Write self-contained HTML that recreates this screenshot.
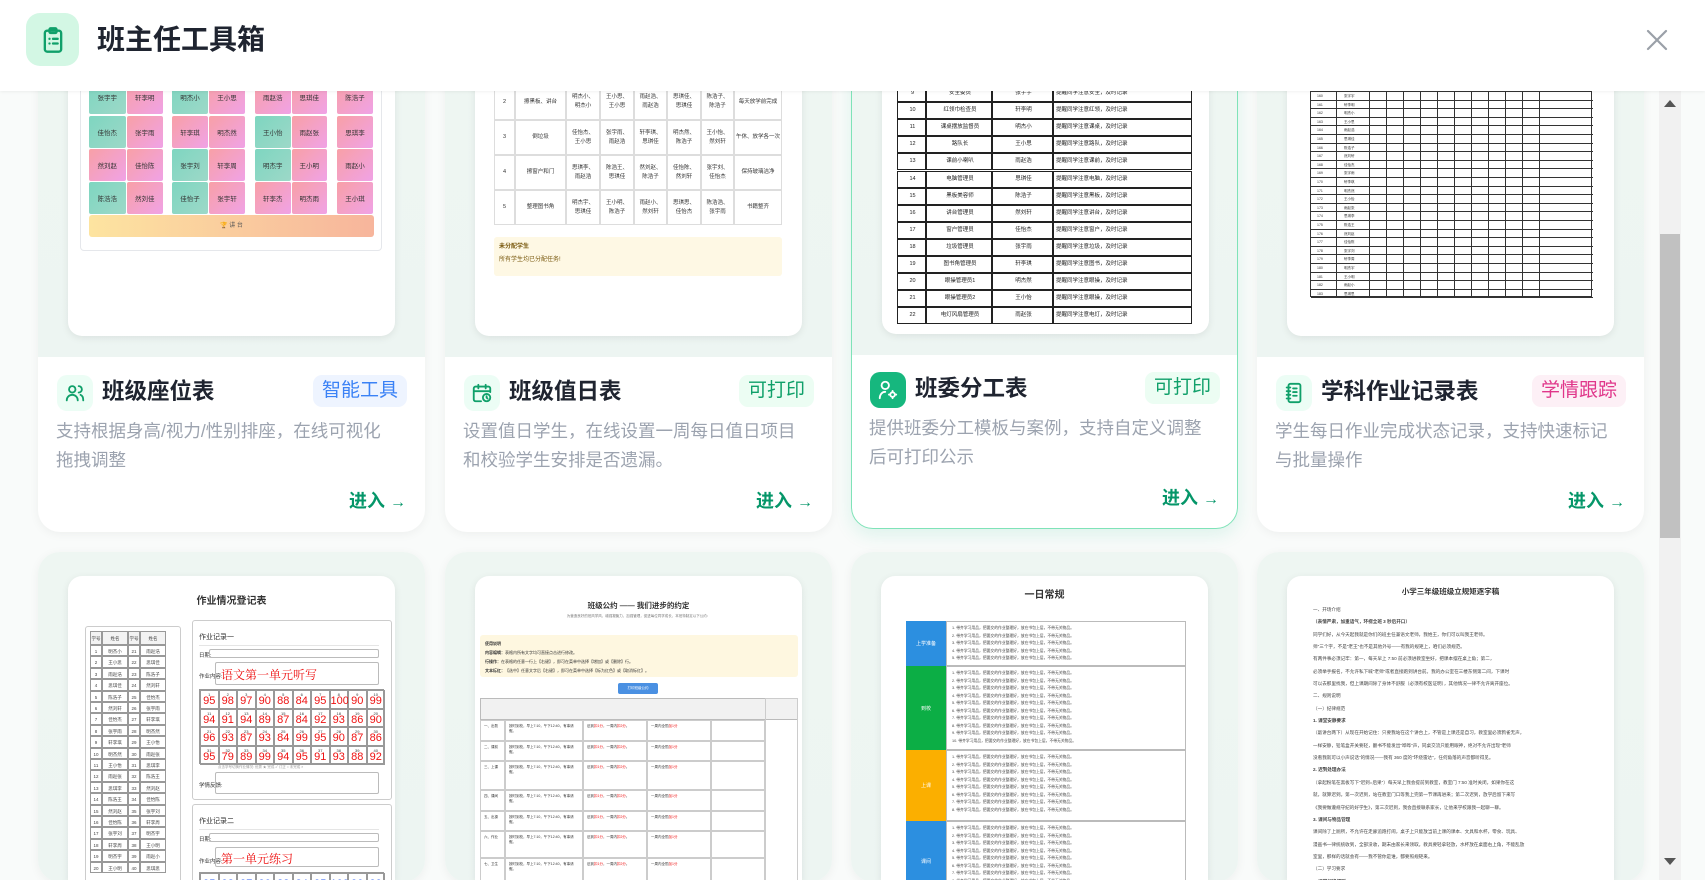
<!DOCTYPE html>
<html><head><meta charset="utf-8">
<style>
*{margin:0;padding:0;box-sizing:border-box}
html{overflow:hidden;width:1705px;height:893px}
body{width:1705px;height:893px;overflow:hidden;background:#fff;font-family:"Liberation Sans","Noto Sans CJK SC",sans-serif;position:relative}
.abs{position:absolute}
#hdr{position:absolute;left:0;top:0;width:1705px;height:91px;background:#fff;box-shadow:0 1px 3px rgba(0,0,0,.06);z-index:5}
#main{position:absolute;left:0;top:91px;width:1705px;height:789px;overflow:hidden;background:#f9fbfa}
.card{position:absolute;width:387px;border-radius:22px;background:#fff;box-shadow:0 2px 10px rgba(0,0,0,.05);overflow:hidden}
.prev{position:absolute;left:0;top:0;width:387px;background:linear-gradient(180deg,#eef6f2,#edf5f2)}
.paper{position:absolute;background:#fff;box-shadow:0 2px 8px rgba(0,0,0,.08);overflow:hidden}
.ic{position:absolute;width:36px;height:36px;border-radius:10px;background:#ecfdf5;display:flex;align-items:center;justify-content:center}
.tt{position:absolute;font-size:22.5px;font-weight:bold;color:#1f2430;line-height:36px;white-space:nowrap}
.bd{position:absolute;height:32px;line-height:32px;font-size:19px;padding:0 9px;border-radius:9px;white-space:nowrap}
.ds{position:absolute;font-size:17.5px;line-height:29px;color:#9ca3af;width:339px}
.en{position:absolute;font-size:18px;font-weight:bold;color:#059669;white-space:nowrap}
</style></head><body>
<div id="hdr">
 <div class="abs" style="left:26px;top:13px;width:53px;height:53px;border-radius:14px;background:#d3f7e4;display:flex;align-items:center;justify-content:center">
  <svg width="28" height="28" viewBox="0 0 24 24" fill="none" stroke="#10a06a" stroke-width="2" stroke-linecap="round" stroke-linejoin="round"><rect x="5" y="4" width="14" height="18" rx="2"/><rect x="9" y="2" width="6" height="4" rx="1"/><path d="M9 11h.01M12 11h4M9 15h.01M12 15h4"/></svg>
 </div>
 <div class="abs" style="left:97px;top:20px;font-size:28px;font-weight:bold;color:#1f2430;line-height:40px">班主任工具箱</div>
 <svg class="abs" style="left:1645px;top:28px" width="24" height="24" viewBox="0 0 24 24" stroke="#9aa0a8" stroke-width="2.2" stroke-linecap="round"><path d="M3 3L21 21M21 3L3 21"/></svg>
</div>
<div id="main"></div>
<div class="abs" style="left:1659px;top:91px;width:22px;height:789px;background:#f1f1f1"></div>
<div class="abs" style="left:1660px;top:234px;width:20px;height:304px;background:#c1c1c1"></div>
<div class="abs" style="left:1664px;top:100px;width:0;height:0;border-left:6px solid transparent;border-right:6px solid transparent;border-bottom:7px solid #555"></div>
<div class="abs" style="left:1664px;top:858px;width:0;height:0;border-left:6px solid transparent;border-right:6px solid transparent;border-top:7px solid #555"></div>
<script>
const M=document.getElementById('main');const O=91;
function el(p,css,html){const d=document.createElement('div');d.style.cssText='position:absolute;'+css;if(html)d.innerHTML=html;p.appendChild(d);return d}
const Ls=[38,445,851,1257];
const icons=[
'<svg width="22" height="22" viewBox="0 0 24 24" fill="none" stroke="#10a06a" stroke-width="2" stroke-linecap="round"><circle cx="9" cy="8" r="3.5"/><path d="M3 20c0-3.5 2.7-6 6-6s6 2.5 6 6M16 4.5a3.5 3.5 0 0 1 0 7M18 14c2 .8 3 3 3 6"/></svg>',
'<svg width="22" height="22" viewBox="0 0 24 24" fill="none" stroke="#10a06a" stroke-width="2" stroke-linecap="round"><path d="M11 21H5a2 2 0 0 1-2-2V7a2 2 0 0 1 2-2h14a2 2 0 0 1 2 2v4M16 3v4M8 3v4M3 10h18"/><circle cx="17" cy="17" r="4"/><path d="M17 15.5V17l1 1"/></svg>',
'<svg width="22" height="22" viewBox="0 0 24 24" fill="none" stroke="#fff" stroke-width="2" stroke-linecap="round"><circle cx="9" cy="7" r="4"/><path d="M3 21c0-4 2.5-7 6-7"/><circle cx="17" cy="17" r="2.5"/><path d="M17 13v1M17 20v1M13 17h1M20 17h1"/></svg>',
'<svg width="22" height="22" viewBox="0 0 24 24" fill="none" stroke="#10a06a" stroke-width="2" stroke-linecap="round"><rect x="6" y="2" width="13" height="20" rx="2"/><path d="M4 6h4M4 10h4M4 14h4M4 18h4M11 7h4M11 11h4M11 15h4"/></svg>'];
const data=[
['班级座位表','智能工具','#3b82f6','#eef4ff','支持根据身高/视力/性别排座，在线可视化拖拽调整'],
['班级值日表','可打印','#10a06a','#ecfdf3','设置值日学生，在线设置一周每日值日项目和校验学生安排是否遗漏。'],
['班委分工表','可打印','#10a06a','#ecfdf3','提供班委分工模板与案例，支持自定义调整后可打印公示'],
['学科作业记录表','学情跟踪','#e0368a','#fdf0f6','学生每日作业完成状态记录，支持快速标记与批量操作']];
const names='张宇轩李明杰王小雨赵思琪陈浩然刘佳怡周子墨吴欣妍郑一鸣孙若曦';
function nm(i){return names.substr((i*2)%18,2)+names.charAt((i*3+1)%20)}
Ls.forEach((L,i)=>{
 const dy=i==2?-3:0;
 const c=el(M,`left:${L}px;top:${-70+dy}px;height:${532+70-O}px;`+(i==2?'border:1.5px solid #7fe3b8;box-shadow:0 6px 18px rgba(16,185,129,.12);':''));c.className='card';
 const p=el(c,`height:${357+70-O}px`);p.className='prev';
 const pa=el(c,`left:30px;top:0;width:327px;height:${336+70-O}px;border-radius:0 0 14px 14px`);pa.className='paper';
 const y0=70-O;
 if(i==0){
  el(pa,`left:12px;top:${y0+70}px;width:302px;height:${251-70}px;border:1px solid #e5e7eb;border-radius:4px`);
  const cols=[[89,164],[172,246],[255,328],[337,374]],rows=[[80,114],[116,148],[149,181],[182,214]];
  rows.forEach((r,ri)=>cols.forEach((cc,ci)=>{const w=cc[1]-cc[0];const n=w>40?2:1;for(let k=0;k<n;k++){const x=cc[0]+k*w/n;const teal=(k==0&&(ci+ri)%3!=2&&ci<3);
   el(pa,`left:${x-68}px;top:${y0+r[0]}px;width:${w/n-1}px;height:${r[1]-r[0]}px;background:${teal?'linear-gradient(135deg,#7ed6c0,#9dd8c8)':'linear-gradient(135deg,#f8a0a6,#f0a2e6)'};font-size:6.5px;color:#333;display:flex;align-items:center;justify-content:center;border-radius:2px`,nm(ri*8+ci*2+k))}}));
  el(pa,`left:21px;top:${y0+215}px;width:285px;height:22px;background:linear-gradient(90deg,#fde4a0,#f7b59c);border-radius:3px;font-size:6px;color:#555;text-align:center;line-height:22px`,'🏆 讲 台');
 }
 if(i==1){
  const xs=[494,515,566,600,634,667,701,734,782];const ys=[84,120,155,190,225];
  for(let r=0;r<4;r++)xs.slice(0,-1).forEach((x,k)=>{el(pa,`left:${x-475}px;top:${y0+ys[r]}px;width:${xs[k+1]-x}px;height:${ys[r+1]-ys[r]}px;border:0.5px solid #ddd;font-size:5.5px;color:#333;display:flex;align-items:center;justify-content:center;text-align:center;line-height:9px;padding:1px`,k==0?(r+2):k==1?['擦黑板、讲台','倒垃圾','擦窗户和门','整理图书角'][r]:k==7?['每天放学前完成','午休、放学各一次','保持玻璃洁净','书籍整齐'][r]:nm(r*6+k)+'、<br>'+nm(r+k))});
  el(pa,`left:19px;top:${y0+237}px;width:288px;height:39px;background:#fef8e4;border-radius:3px;font-size:6px;color:#7a5a10;padding:4px 5px;line-height:13px`,'<b>未分配学生</b><br>所有学生均已分配任务!');
 }
 if(i==2){
  const t=['安全委员','红领巾检查员','课桌摆放监督员','路队长','课前小喇叭','电脑管理员','黑板美容师','讲台管理员','窗户管理员','垃圾管理员','图书角管理员','眼操管理员1','眼操管理员2','电灯风扇管理员'];
  for(let r=0;r<14;r++){const y=87+r*17.1;[[896,925,r+9],[925,991,t[r]],[991,1052,nm(r)],[1052,1191,'提醒同学注意'+t[r].substr(0,2)+'，及时记录']].forEach(q=>el(pa,`left:${q[0]-881}px;top:${y0+y}px;width:${q[1]-q[0]}px;height:17.1px;border:0.8px solid #222;font-size:5.5px;color:#222;line-height:15px;text-align:${q[0]==1052?'left':'center'};padding-left:2px;white-space:nowrap;overflow:hidden`,q[2]))}
 }
 if(i==3){
  let h='';for(let r=0;r<24;r++){h+=`<div style="position:absolute;left:0;top:${r*8.6}px;width:282px;height:8.6px;border-bottom:0.8px solid #333;font-size:3.5px;line-height:8px;color:#333"><span style="position:absolute;left:6px">${160+r}</span><span style="position:absolute;left:33px">${nm(r)}</span></div>`}
  [25,58,75,92,109,126,143,160,177,194,211,228].forEach(x=>h+=`<div style="position:absolute;left:${x}px;top:0;width:0.8px;height:206px;background:#333"></div>`);
  el(pa,`left:${1310-1287}px;top:${y0+91}px;width:282px;height:206px;border:1px solid #333`,h);
 }
 const d=data[i];
 const ic=el(M,`left:${L+19}px;top:${375+dy-O}px;`+(i==2?'background:#16b77e;':''),icons[i]);ic.className='ic';
 el(M,`left:${L+64}px;top:${374+dy-O}px`,d[0]).className='tt';
 el(M,`right:${1705-(L+369)}px;top:${375+dy-O}px;color:${d[2]};background:${d[3]}`,d[1]).className='bd';
 el(M,`left:${L+18}px;top:${417+dy-O}px`,d[4]).className='ds';
 el(M,`right:${1705-(L+368)}px;top:${487+dy-O}px`,'进入 <span style="font-size:16px">→</span>').className='en';
 const c2=el(M,`left:${L}px;top:${552-O}px;height:330px`);c2.className='card';
 el(c2,'height:330px').className='prev';
 const p2=el(c2,`left:30px;top:24px;width:327px;height:306px;border-radius:14px 14px 0 0`);p2.className='paper';
});
const papers=[...M.querySelectorAll('.card')].filter((c,k)=>k%2==1).map(c=>c.querySelector('.paper'));
function txt(p,x,y,s,css){return el(p,`left:${x}px;top:${y}px;`+(css||''),s)}
(function(p){
 txt(p,0,16,'作业情况登记表','width:327px;text-align:center;font-size:10px;font-weight:bold;color:#333');
 el(p,'left:17px;top:50px;width:96px;height:340px;border:1px solid #ccc;border-radius:3px');
 let h='';for(let r=0;r<21;r++){[[0,12],[12,38],[38,50],[50,76]].forEach((q,k)=>{h+=`<div style="position:absolute;left:${q[0]}px;top:${r==0?0:14+(r-1)*11.4}px;width:${q[1]-q[0]}px;height:${r==0?14:11.4}px;border:0.5px solid #999;font-size:4.5px;color:#444;text-align:center;line-height:${r==0?14:11}px;background:${r==0?'#f3f3f3':'#fff'}">${r==0?['学号','姓名','学号','姓名'][k]:k==0?r:k==2?r+20:nm(r+k)}</div>`})}
 el(p,'left:22px;top:55px;width:76px;height:300px',h);
 el(p,'left:124px;top:44px;width:200px;height:180px;border:1px solid #ccc;border-radius:3px');
 txt(p,131,56,'作业记录一','font-size:7px;color:#333;width:180px;border-bottom:1px solid #e5e5e5;padding-bottom:3px');
 txt(p,131,75,'日期:','font-size:5.5px;color:#333');el(p,'left:141px;top:73px;width:170px;height:9px;border:1px solid #bbb;border-radius:2px');
 txt(p,131,96,'作业内容:','font-size:5.5px;color:#333');el(p,'left:147px;top:86px;width:164px;height:23px;border:1px solid #bbb;border-radius:2px;font-size:12px;color:#e11;padding:3px 5px;font-family:"Noto Serif CJK SC",serif','语文第一单元听写');
 const sc=[95,98,97,90,88,84,95,100,90,99,94,91,94,89,87,84,92,93,86,90,96,93,87,93,84,99,95,90,87,86,95,79,89,99,94,95,91,93,88,92];
 let g='';sc.forEach((v,k)=>{g+=`<div style="position:absolute;left:${(k%10)*18.5}px;top:${Math.floor(k/10)*18.7}px;width:18.5px;height:18.7px;border:0.5px solid #999;text-align:center;color:#e11;font-size:11px;line-height:21px"><span style="position:absolute;left:0;right:0;top:-7px;font-size:4px;color:#333">${k+1}</span>${v}</div>`});
 el(p,'left:131px;top:113px;width:185px;height:75px;border:1px solid #999',g);
 txt(p,150,189,'点击学号切换作业情况: 优秀 ★ 完成 ✓ 订正 ○ 未完成 ×','font-size:3.5px;color:#999');
 txt(p,131,205,'学情反馈:','font-size:5.5px;color:#333');el(p,'left:147px;top:196px;width:164px;height:22px;border:1px solid #bbb;border-radius:2px');
 el(p,'left:124px;top:228px;width:200px;height:160px;border:1px solid #ccc;border-radius:3px');
 txt(p,131,240,'作业记录二','font-size:7px;color:#333;width:180px;border-bottom:1px solid #e5e5e5;padding-bottom:3px');
 txt(p,131,259,'日期:','font-size:5.5px;color:#333');el(p,'left:141px;top:257px;width:170px;height:9px;border:1px solid #bbb;border-radius:2px');
 txt(p,131,281,'作业内容:','font-size:5.5px;color:#333');el(p,'left:147px;top:271px;width:164px;height:20px;border:1px solid #bbb;border-radius:2px;font-size:12px;color:#e11;padding:2px 5px;font-family:"Noto Serif CJK SC",serif','第一单元练习');
 let g2='';sc.slice(0,10).forEach((v,k)=>{g2+=`<div style="position:absolute;left:${k*18.5}px;top:0;width:18.5px;height:18.7px;border:0.5px solid #999;text-align:center;color:#2255ee;font-size:11px;line-height:21px">${v}</div>`});
 el(p,'left:131px;top:296px;width:185px;height:20px;border:1px solid #999',g2);
})(papers[0]);
(function(p){
 txt(p,0,24,'班级公约 —— 我们进步的约定','width:327px;text-align:center;font-size:7.5px;font-weight:bold;color:#333');
 txt(p,0,38,'为营造良好的班风学风，增强凝聚力，加强管理，促进每位同学成长，本班特制定以下公约：','width:327px;text-align:center;font-size:3.5px;color:#777');
 el(p,'left:5px;top:59px;width:318px;height:42px;background:#fef7e0;border-radius:3px;font-size:4px;color:#333;line-height:9px;padding:4px 5px','<b>使用说明</b><br><b>内容编辑：</b>表格内所有文字均可直接点击进行修改。<br><b>行操作：</b>在表格的任意一行上【右键】，即可在菜单中选择【增加】或【删除】行。<br><b>文本标红：</b>【选中】任意文字后【右键】，即可在菜单中选择【标为红色】或【取消标红】。');
 el(p,'left:143px;top:107px;width:40px;height:11px;background:#4a90e2;border-radius:2px;font-size:3.5px;color:#fff;text-align:center;line-height:11px','打印班级公约');
 const xs=[5,30,108,172,236,290,323];
 let h='';h+=`<div style="position:absolute;left:0;top:0;width:318px;height:22px;background:#f1f1f1;border:0.6px solid #bbb"></div>`;
 const ry=[22,43,63,92,113,133,160,200];
 for(let r=0;r<ry.length-1;r++)xs.slice(0,-1).forEach((x,k)=>{if(k==5)return;h+=`<div style="position:absolute;left:${x-5}px;top:${ry[r]}px;width:${xs[k+1]-x}px;height:${ry[r+1]-ry[r]}px;border:0.5px solid #ccc;font-size:3.5px;line-height:5px;padding:3px;color:#333">${k==0?['一、出勤','二、课前','三、上课','四、课间','五、出操','六、作业','七、卫生'][r]:k==1?'按时到校，早上7:10，午下12:40，有事请假。':k==2?'迟到<span style="color:#e11">扣1分</span>，一周内<span style="color:#e11">扣2分</span>。':k==3?'一周内全勤<span style="color:#e11">加1分</span>':''}</div>`});
 h+=`<div style="position:absolute;left:285px;top:0;width:33px;height:200px;border:0.5px solid #ccc"></div>`;
 el(p,'left:5px;top:122px;width:318px;height:260px',h);
})(papers[1]);
(function(p){
 txt(p,0,10,'一日常规','width:327px;text-align:center;font-size:10px;font-weight:bold;color:#333');
 const secs=[['上学准备','#2c8fe0',45],['到校','#0cae45',84],['上课','#fbaf00',71],['课间','#2c8fe0',80]];
 let y=45;secs.forEach(s=>{el(p,`left:25px;top:${y}px;width:40px;height:${s[2]}px;background:${s[1]};color:#fff;font-size:5px;display:flex;align-items:center;justify-content:center`,s[0]);
  let t='';for(let k=0;k<Math.floor(s[2]/8);k++)t+=(k+1)+'. 带齐学习用品，把要交的作业整理好，放在书包上层，不带无关物品。<br>';
  el(p,`left:65px;top:${y}px;width:240px;height:${s[2]}px;border:0.8px solid #bbb;font-size:3.8px;line-height:7.5px;color:#444;padding:3px 5px;overflow:hidden`,t);y+=s[2];});
})(papers[2]);
(function(p){
 txt(p,0,10,'小学三年级班级立规矩逐字稿','width:327px;text-align:center;font-size:7.5px;font-weight:bold;color:#333');
 let t='';const ln=['一、开场介绍','<b>（表情严肃，加重语气，环视全班 3 秒后开口）</b>','同学们好，从今天起我就是你们的班主任兼语文老师，我姓王，你们可以叫我王老师。','师"三个字，不是"老王"也不是其他外号——有我的规矩上，咱们必须规范。','有两件事必须记牢：第一，每天早上 7:50 前必须进教室坐好，把课本摆在桌上角；第二，','必须举手报名，不允许私下喊"老师"或者直接跑到讲台前。我的办公室在三楼东侧第二间，下课时','可以去那里找我，但上课期间除了身体不舒服（必须有校医证明），其他情况一律不允许离开座位。','二、规则说明','（一）纪律规范','<b>1. 课堂安静要求</b>','（敲讲台两下）从现在开始记住：只要我站在这个讲台上，不管是上课还是自习，教室里必须鸦雀无声，','一样安静，铅笔盒开关要轻，翻书不能发出"哗哗"声，同桌交流只能用眼神，绝对不允许出现"老师','没看我就可以小声说话"的情况——我有 360 度的"环绕雷达"，任何角落的声音都听得见。','<b>2. 迟到处理办法</b>','（拿起粉笔在黑板写下"迟到=后果"）每天早上我会提前到教室，教室门 7:50 准时关闭，如果你在这','就，就算迟到。第一次迟到，站在教室门口等我上完第一节课再进来；第二次迟到，放学后留下来写','《我要做遵规守纪的好学生》，第三次迟到，我会直接联系家长，让他来学校跟我一起聊一聊。','<b>3. 课间与物品管理</b>','课间除了上厕所，不允许在走廊追跑打闹，桌子上只能放当前上课的课本、文具和水杯，零食、玩具、','漫画书一律统统收到，全部没收，期末由家长来领取。教具要轻拿轻放，水杯放在桌面右上角，不能乱放','室里，那样的话就会有——我不管你是谁，都要照规矩来。','（二）学习要求','<b>1. 课堂纪律细则</b>'];
 ln.forEach((s,k)=>t+=`<div style="height:12.35px;white-space:nowrap;overflow:hidden">${s}</div>`);
 el(p,'left:26px;top:28px;width:282px;font-size:4.6px;line-height:12.35px;color:#444',t);
})(papers[3]);
</script>
</body></html>
